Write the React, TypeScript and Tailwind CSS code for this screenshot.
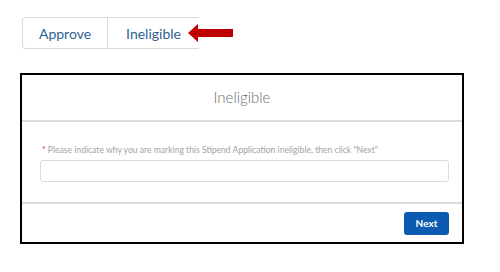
export default function App() {
  return (
    <div
      className="h-[272px] w-[500px] bg-white"
      style={{ fontFamily: "Lato, 'Open Sans', sans-serif" }}
    >
      {/* button group + arrow */}
      <div className="flex items-center pl-[22px] pt-[17px]">
        <div className="flex h-[32px] rounded-l-[4px] border border-r-0 border-[#dddbda] text-[14px] text-[#2f5f93]">
          <div className="flex w-[85px] items-center justify-center border-r border-[#dddbda]">
            Approve
          </div>
          <div className="flex w-[91px] items-center justify-center">
            Ineligible
          </div>
        </div>
        <svg width="46" height="20" viewBox="0 0 46 20" className="-ml-[11px]">
          <polygon
            points="0,10 10,1 10,6 45,6 45,14 10,14 10,19"
            fill="#c00000"
          />
        </svg>
      </div>

      {/* modal */}
      <div className="ml-[20px] mt-[24px] w-[444px] border-2 border-black">
        <div className="flex h-[47px] items-center justify-center border-b-2 border-[#dddbda] text-[15px] font-light text-[#6b6b6b]">
          Ineligible
        </div>
        <div className="pb-[20px] pl-[18px] pr-[13px] pt-[22px]">
          <p className="mb-[3px] pl-[2px] text-[8.6px] text-[#a3a3a3]">
            <span className="text-[#c23934]">*</span> Please indicate why you
            are marking this Stipend Application ineligible, then click "Next"
          </p>
          <div className="h-[22px] rounded-[3px] border border-[#dddbda]" />
        </div>
        <div className="flex justify-end border-t-2 border-[#dddbda] pb-[7px] pr-[13px] pt-[8px]">
          <button className="flex h-[23px] w-[45px] items-center justify-center rounded-[3px] bg-[#0b5cb0] text-[10px] font-bold text-white">
            Next
          </button>
        </div>
      </div>
    </div>
  );
}
